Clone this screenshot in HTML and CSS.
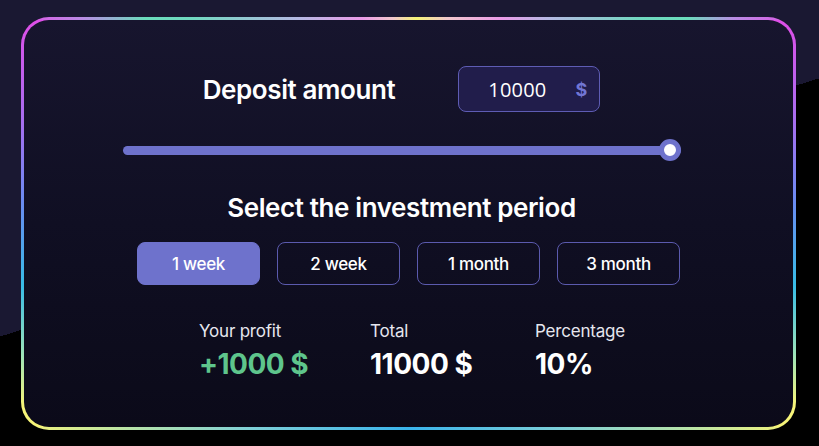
FILE: index.html
```html
<!DOCTYPE html>
<html lang="en">
<head>
  <meta charset="UTF-8">
  <title>Deposit calculator</title>
  <link rel="stylesheet" href="styles.css">
</head>
<body>
<div class="frame">
  <div class="card">
    <!-- deposit amount -->
    <div class="deposit-row">
      <h2 class="deposit-title">Deposit amount</h2>
      <div class="amount-box">
        <span class="amount-value">10000</span>
        <span class="amount-currency">$</span>
      </div>
    </div>

    <!-- slider -->
    <div class="slider">
      <div class="slider-track"></div>
      <div class="slider-thumb"></div>
    </div>

    <h2 class="period-title">Select the investment period</h2>

    <div class="period-group">
      <button class="period-btn active">1 week</button>
      <button class="period-btn">2 week</button>
      <button class="period-btn">1 month</button>
      <button class="period-btn">3 month</button>
    </div>

    <!-- results -->
    <div class="stats">
      <div class="stat stat-profit">
        <div class="stat-label">Your profit</div>
        <div class="stat-value green">+1000 $</div>
      </div>
      <div class="stat stat-total">
        <div class="stat-label">Total</div>
        <div class="stat-value">11000 $</div>
      </div>
      <div class="stat">
        <div class="stat-label">Percentage</div>
        <div class="stat-value">10%</div>
      </div>
    </div>
  </div>
</div>
</body>
</html>
```

FILE: styles.css
```css
html, body {
  height: 100%;
}
body {
  margin: 0;
  font-family: Inter, "Open Sans", sans-serif;
  color: #fff;
  background: linear-gradient(162.5deg, #1a1832 321px, #000 321px);
  padding: 17px 23px 16px 21px;
  box-sizing: border-box;
}
.frame {
  height: 413px;
  padding: 3px;
  box-sizing: border-box;
  border-radius: 28px;
  background:
    linear-gradient(90deg, #df52e6 0%, #b98ce4 8%, #6adcbc 16%, #70d8c0 22%, #b6b8e4 36%, #ea9ae8 44%, #f2c8cc 48%, #f4f276 51%, #f2c8cc 55%, #ea9ae8 62%, #b6b8e4 68%, #70d8c0 80%, #6adcbc 86%, #b98ce4 92%, #df52e6 100%) top / 100% 3px no-repeat,
    linear-gradient(90deg, #f6f478 0%, #b8e4a8 14%, #7ed0d8 30%, #3ab4ec 50%, #7ed0d8 70%, #b8e4a8 86%, #f6f478 100%) bottom / 100% 3px no-repeat,
    linear-gradient(180deg, #e04ee8 0%, #a86ef0 25%, #6a8cf2 45%, #38bce6 65%, #9ee4b8 82%, #f6f478 94%, #f6f478 100%);
}
.card {
  height: 100%;
  border-radius: 25px;
  background: linear-gradient(180deg, #17152e 0%, #100f23 50%, #0b0a19 100%);
  display: flex;
  flex-direction: column;
  align-items: center;
  padding-top: 46px;
  box-sizing: border-box;
}
.deposit-row {
  display: flex;
  align-items: center;
  gap: 63px;
  margin-right: 14px;
}
.deposit-title {
  margin: 0;
  font-size: 26px;
  font-weight: 600;
  letter-spacing: -0.4px;
}
.amount-box {
  width: 142px;
  height: 46px;
  box-sizing: border-box;
  border: 1px solid #5e5cb4;
  border-radius: 8px;
  background: #211d4b;
  display: flex;
  align-items: center;
  padding: 0 12px 0 29px;
}
.amount-value {
  flex: 1;
  font-size: 20px;
  font-family: "Open Sans", sans-serif;
  letter-spacing: 0.2px;
}
.amount-currency {
  color: #7176d4;
  font-weight: 700;
  font-size: 18px;
}
.slider {
  position: relative;
  width: 558px;
  height: 22px;
  margin-top: 27px;
  margin-right: 14px;
  display: flex;
  align-items: center;
}
.slider-track {
  width: 100%;
  height: 9px;
  border-radius: 5px;
  background: #6e72cc;
}
.slider-thumb {
  position: absolute;
  right: 0;
  top: 0;
  width: 12px;
  height: 12px;
  border: 5px solid #6e72cc;
  border-radius: 50%;
  background: #fff;
}
.period-title {
  margin: 32px 0 0;
  font-size: 26px;
  font-weight: 600;
  letter-spacing: -0.4px;
  line-height: 30px;
  margin-right: 14px;
}
.period-group {
  display: flex;
  gap: 17px;
  margin-top: 19px;
}
.period-btn {
  width: 123px;
  height: 43px;
  border: 1px solid #5b5aae;
  border-radius: 8px;
  background: transparent;
  color: #fff;
  font-family: Inter, sans-serif;
  font-size: 17px;
  font-weight: 500;
  letter-spacing: -0.3px;
}
.period-btn.active {
  background: #6e72cc;
  border-color: #6e72cc;
}
.stats {
  display: flex;
  margin-top: 35px;
  margin-left: 7px;
}
.stat-profit {
  width: 171px;
}
.stat-total {
  width: 165px;
}
.stat-label {
  font-size: 17px;
  line-height: 22px;
  color: #e6e6ee;
  letter-spacing: -0.2px;
}
.stat-value {
  margin-top: 5px;
  font-size: 28px;
  font-weight: 700;
  letter-spacing: -0.5px;
}
.stat-value.green {
  color: #5ec58c;
}
```
